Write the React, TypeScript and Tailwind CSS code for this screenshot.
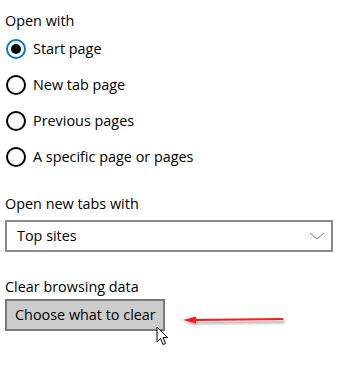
import React from "react";

function Radio({ checked, label }: { checked?: boolean; label: string }) {
  return (
    <div className="flex h-9 items-center">
      <div
        className={
          checked
            ? "ml-[1px] flex h-5 w-5 items-center justify-center rounded-full border-2 border-[#0078d7]"
            : "ml-[1px] flex h-5 w-5 items-center justify-center rounded-full border-2 border-black"
        }
      >
        {checked && <div className="h-[10px] w-[10px] rounded-full bg-black" />}
      </div>
      <span className="ml-[7px]">{label}</span>
    </div>
  );
}

export default function App() {
  return (
    <div
      className="relative h-[368px] w-[339px] overflow-hidden bg-white px-[5px] pt-[11px] text-[14.4px] leading-5 text-black"
      style={{ fontFamily: '"Segoe UI", "Open Sans", "Liberation Sans", sans-serif' }}
    >
      <div>Open with</div>
      <div>
        <Radio checked label="Start page" />
        <Radio label="New tab page" />
        <Radio label="Previous pages" />
        <Radio label="A specific page or pages" />
      </div>
      <div className="mt-[19px]">Open new tabs with</div>
      <div className="mt-[6px] flex h-[32px] w-[328px] items-center justify-between border-2 border-[#8a8a8a] bg-white pl-[10px] pr-[6px]">
        <span>Top sites</span>
        <svg width="16" height="10" viewBox="0 0 16 10">
          <path d="M1 2 L8 8 L15 2" fill="none" stroke="#7a7a7a" strokeWidth="1" />
        </svg>
      </div>
      <div className="mt-[25px]">Clear browsing data</div>
      <div className="mt-[2px] flex h-[32px] w-[160px] items-center border-2 border-[#7a7a7a] bg-[#cccccc] pl-[8px]">
        Choose what to clear
      </div>

      <svg
        className="absolute left-[180px] top-[312px]"
        width="112"
        height="18"
        viewBox="0 0 112 18"
      >
        <defs>
          <filter id="sh" x="-10%" y="-50%" width="130%" height="250%">
            <feGaussianBlur stdDeviation="1.2" />
          </filter>
        </defs>
        <g filter="url(#sh)" opacity="0.45">
          <path d="M105 10 L16 11" stroke="#555" strokeWidth="2.5" />
          <path d="M5 10 L17 6 L17 14 Z" fill="#555" />
        </g>
        <path d="M103 7 L14 8" stroke="#ff1a1a" strokeWidth="2" />
        <path d="M3 8 L16 4.5 L16 11.5 Z" fill="#ff1a1a" />
      </svg>

      <svg
        className="absolute left-[156px] top-[326px]"
        width="14"
        height="21"
        viewBox="0 0 14 21"
      >
        <path
          d="M1 1 L1 16 L4.5 12.5 L7 18.5 L9.5 17.5 L7 11.5 L11.5 11.5 Z"
          fill="white"
          stroke="black"
          strokeWidth="1"
          strokeLinejoin="miter"
        />
      </svg>
    </div>
  );
}
